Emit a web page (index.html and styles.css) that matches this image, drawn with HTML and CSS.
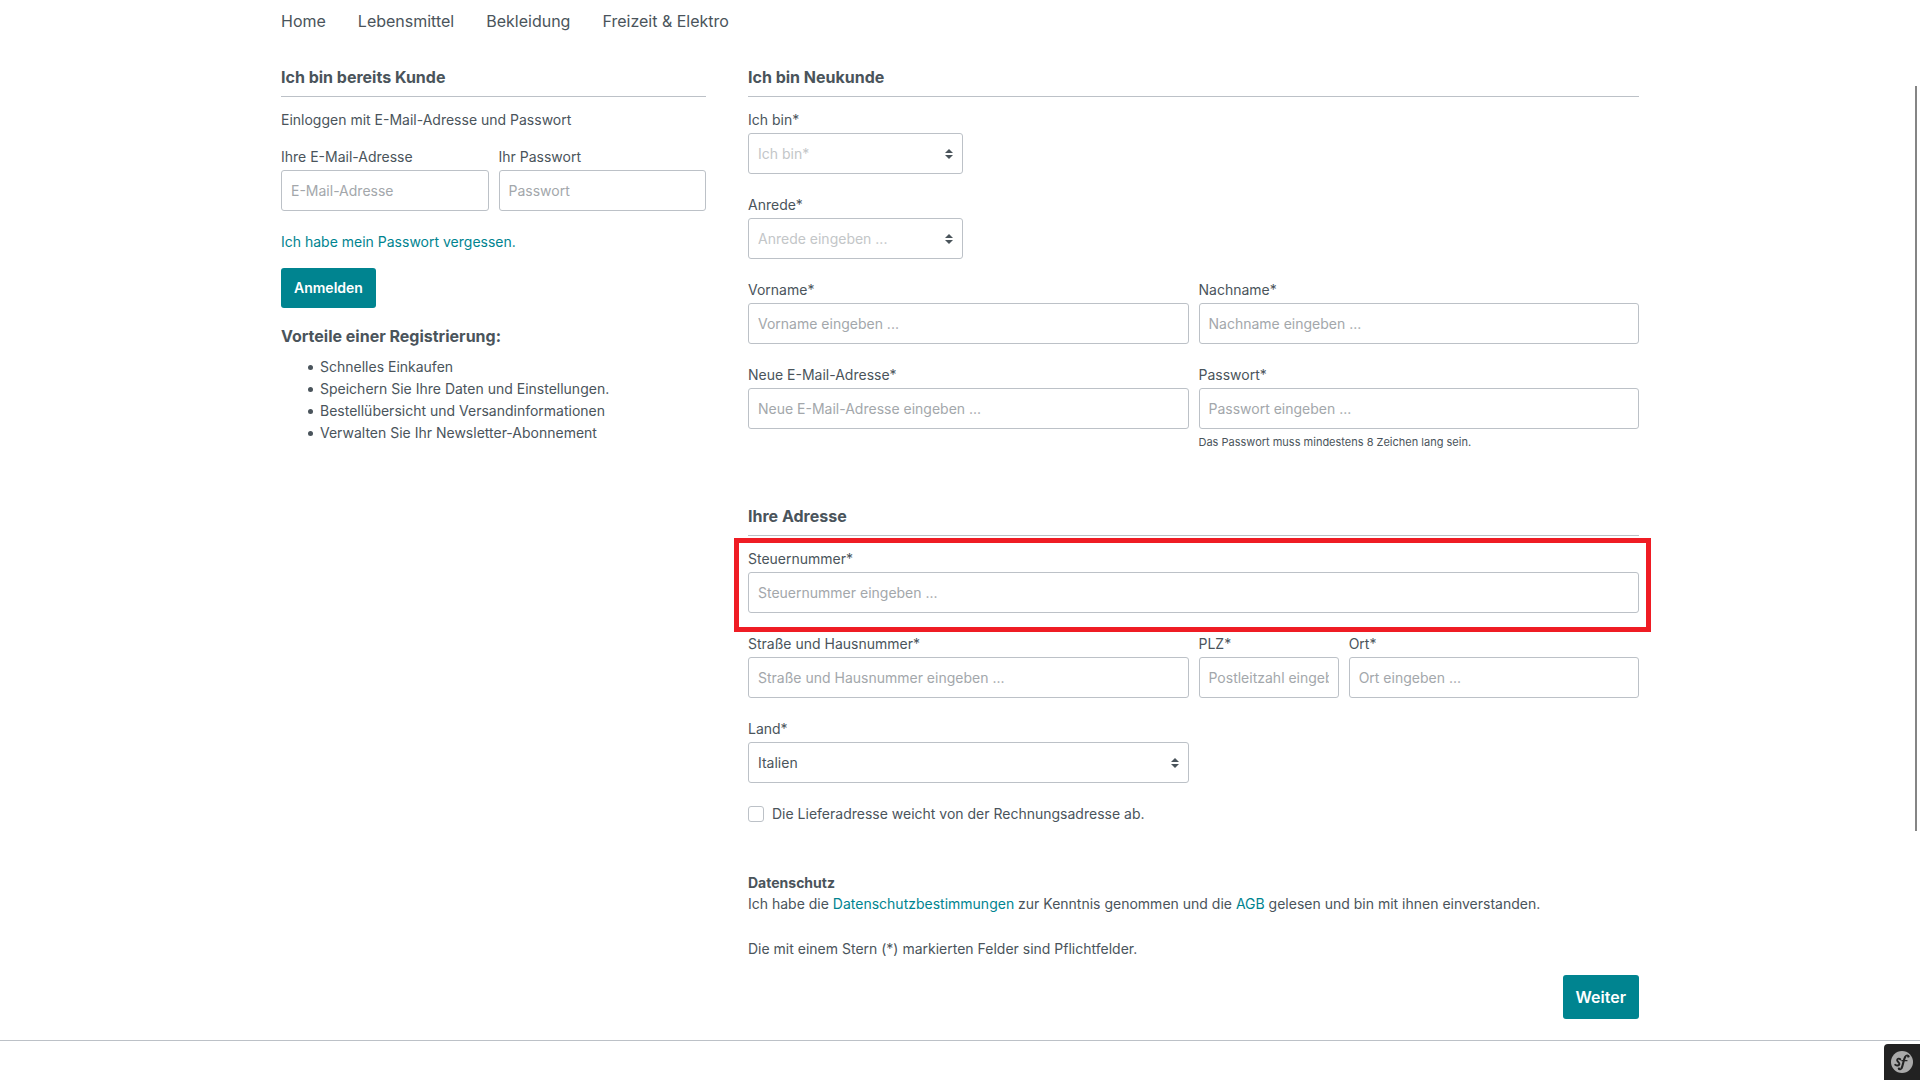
FILE: index.html
```html
<!DOCTYPE html>
<html lang="de">
<head>
<meta charset="utf-8">
<meta name="viewport" content="width=device-width, initial-scale=1">
<title>Registrierung</title>
<link rel="stylesheet" href="styles.css">
</head>
<body>
<nav class="main-nav container">
  <a href="#">Home</a>
  <a href="#">Lebensmittel</a>
  <a href="#">Bekleidung</a>
  <a href="#">Freizeit &amp; Elektro</a>
</nav>

<main class="container account">
  <section class="login">
    <form>
      <h2 class="card-title">Ich bin bereits Kunde</h2>
      <p class="login-intro">Einloggen mit E-Mail-Adresse und Passwort</p>
      <div class="login-fields">
        <div class="field">
          <label for="login-mail">Ihre E-Mail-Adresse</label>
          <input class="control" id="login-mail" type="email" placeholder="E-Mail-Adresse">
        </div>
        <div class="field">
          <label for="login-password">Ihr Passwort</label>
          <input class="control" id="login-password" type="password" placeholder="Passwort">
        </div>
      </div>
      <p class="recover"><a href="#">Ich habe mein Passwort vergessen.</a></p>
      <button class="btn" type="submit">Anmelden</button>
    </form>
    <h2 class="advantages-title">Vorteile einer Registrierung:</h2>
    <ul class="advantages">
      <li>Schnelles Einkaufen</li>
      <li>Speichern Sie Ihre Daten und Einstellungen.</li>
      <li>Bestellübersicht und Versandinformationen</li>
      <li>Verwalten Sie Ihr Newsletter-Abonnement</li>
    </ul>
  </section>

  <form class="register">
    <h2 class="card-title">Ich bin Neukunde</h2>
    <div class="form-grid">
      <div class="field quarter">
        <label for="account-type">Ich bin*</label>
        <div class="select">
          <select class="control is-empty" id="account-type"><option>Ich bin*</option></select>
          <svg class="caret" viewBox="0 0 8 10" aria-hidden="true"><path d="M4 0 8 4H0zM4 10 8 6H0z"/></svg>
        </div>
      </div>
      <div class="field quarter">
        <label for="salutation">Anrede*</label>
        <div class="select">
          <select class="control is-empty" id="salutation"><option>Anrede eingeben ...</option></select>
          <svg class="caret" viewBox="0 0 8 10" aria-hidden="true"><path d="M4 0 8 4H0zM4 10 8 6H0z"/></svg>
        </div>
      </div>
      <div class="field half new-row">
        <label for="first-name">Vorname*</label>
        <input class="control" id="first-name" type="text" placeholder="Vorname eingeben ...">
      </div>
      <div class="field half">
        <label for="last-name">Nachname*</label>
        <input class="control" id="last-name" type="text" placeholder="Nachname eingeben ...">
      </div>
      <div class="field half">
        <label for="mail">Neue E-Mail-Adresse*</label>
        <input class="control" id="mail" type="email" placeholder="Neue E-Mail-Adresse eingeben ...">
      </div>
      <div class="field half">
        <label for="password">Passwort*</label>
        <input class="control" id="password" type="password" placeholder="Passwort eingeben ...">
        <small class="hint">Das Passwort muss mindestens 8 Zeichen lang sein.</small>
      </div>
    </div>

    <h2 class="card-title address-title">Ihre Adresse</h2>
    <div class="form-grid">
      <div class="field full highlighted">
        <label for="tax">Steuernummer*</label>
        <input class="control" id="tax" type="text" placeholder="Steuernummer eingeben ...">
      </div>
      <div class="field half">
        <label for="street">Straße und Hausnummer*</label>
        <input class="control" id="street" type="text" placeholder="Straße und Hausnummer eingeben ...">
      </div>
      <div class="field sixth">
        <label for="zip">PLZ*</label>
        <input class="control" id="zip" type="text" placeholder="Postleitzahl eingeben ...">
      </div>
      <div class="field third">
        <label for="city">Ort*</label>
        <input class="control" id="city" type="text" placeholder="Ort eingeben ...">
      </div>
      <div class="field half">
        <label for="country">Land*</label>
        <div class="select">
          <select class="control" id="country"><option>Italien</option></select>
          <svg class="caret" viewBox="0 0 8 10" aria-hidden="true"><path d="M4 0 8 4H0zM4 10 8 6H0z"/></svg>
        </div>
      </div>
    </div>

    <div class="check">
      <input id="different-shipping" type="checkbox">
      <label for="different-shipping">Die Lieferadresse weicht von der Rechnungsadresse ab.</label>
    </div>

    <div class="privacy">
      <strong>Datenschutz</strong>
      <p>Ich habe die <a href="#">Datenschutzbestimmungen</a> zur Kenntnis genommen und die <a href="#">AGB</a> gelesen und bin mit ihnen einverstanden.</p>
    </div>
    <p class="required-note">Die mit einem Stern (*) markierten Felder sind Pflichtfelder.</p>
    <div class="submit">
      <button class="btn btn-large" type="submit">Weiter</button>
    </div>
  </form>
</main>

<footer class="footer"></footer>

<div class="scroll-thumb"></div>
<button class="debug-toggle" type="button" aria-label="Symfony">
  <svg viewBox="0 0 24 24" aria-hidden="true">
    <circle cx="12" cy="12" r="11" fill="#aaa"/>
    <g fill="none" stroke="#222" stroke-linecap="round" stroke-linejoin="round">
      <path stroke-width="1.9" d="M10.300 9.400C9.500 8.200 7.300 8.300 7.100 10c-.2 1.700 2.800 2.300 2.300 4.200-.3 1.300-2.300 1.900-4.200.6"/>
      <path stroke-width="2.100" d="M15.400 6.600c-1.700 2-2.300 8.600-3.800 11.500"/>
      <path stroke-width="1.400" d="M18.700 6.200c-.6-1.700-2.400-1.200-3.300.4M11.600 18.100c-.8 1.500-2.200 1.900-2.900.8"/>
      <path stroke-width="1.200" d="M11.800 10.700h5.200"/>
    </g>
    <circle cx="18.300" cy="6.400" r="1.200" fill="#222"/>
    <circle cx="9" cy="18.600" r="1.200" fill="#222"/>
  </svg>
</button>
</body>
</html>
```

FILE: styles.css
```css
* {
  box-sizing: border-box;
}

body {
  margin: 0;
  background: #fff;
  color: #4a545b;
  font: 14px/21px Inter, "Liberation Sans", sans-serif;
}

h2,
p,
ul {
  margin: 0;
}

a {
  color: #008490;
  text-decoration: none;
}

.container {
  max-width: 1398px;
  margin: 0 auto;
  padding: 0 20px;
}

.main-nav {
  display: flex;
  gap: 32px;
  padding-top: 9px;
  font-size: 16px;
  line-height: 24px;
}

.main-nav a {
  color: inherit;
}

.account {
  display: grid;
  grid-template-columns: 425fr 891fr;
  gap: 42px;
  align-items: start;
  padding-top: 32px;
}

.card-title {
  margin-bottom: 12px;
  padding-bottom: 7px;
  border-bottom: 1px solid #bcc1c7;
  font-size: 16px;
  line-height: 24px;
}

.login-intro {
  margin-bottom: 16px;
}

.login-fields {
  display: grid;
  grid-template-columns: 1fr 1fr;
  gap: 10px;
}

.form-grid {
  display: grid;
  grid-template-columns: repeat(12, minmax(0, 1fr));
  gap: 20px 10px;
}

.field {
  display: flex;
  flex-direction: column;
  gap: 3px;
  min-width: 0;
}

.full { grid-column: span 12; }
.half { grid-column: span 6; }
.third { grid-column: span 4; }
.quarter { grid-column: 1 / span 3; }
.sixth { grid-column: span 2; }
.new-row { grid-column: 1 / span 6; }

.control {
  display: block;
  width: 100%;
  height: 41px;
  padding: 0 9px;
  border: 1px solid #bcc1c7;
  border-radius: 3px;
  background: #fff;
  color: inherit;
  font: inherit;
  appearance: none;
}

.control::placeholder {
  color: #a3a7ab;
  opacity: 1;
}

.control.is-empty {
  color: #c3c6c8;
}

.select {
  position: relative;
}

.caret {
  position: absolute;
  top: 16px;
  right: 10px;
  width: 8px;
  height: 10px;
  fill: #4a545b;
  pointer-events: none;
}

.hint {
  margin-top: 2px;
  font-size: 11px;
  line-height: 17px;
}

.recover {
  margin: 20px 0 16px;
}

.btn {
  height: 40px;
  padding: 0 13px;
  border: 0;
  border-radius: 3px;
  background: #008490;
  color: #fff;
  font: 600 14px/40px Inter, "Liberation Sans", sans-serif;
}

.btn-large {
  height: 44px;
  font-size: 16px;
}

.advantages-title {
  margin: 16px 0 8px;
  font-size: 16px;
  line-height: 24px;
}

.advantages {
  padding-left: 27px;
  line-height: 22px;
  list-style: none;
}

.advantages li {
  display: flex;
  align-items: center;
  gap: 7px;
}

.advantages li::before {
  content: "";
  width: 5px;
  height: 5px;
  border-radius: 50%;
  background: #4a545b;
}

.address-title {
  margin-top: 53px;
}

.highlighted {
  position: relative;
}

.highlighted::after {
  content: "";
  position: absolute;
  inset: -10px -12px -19px -14px;
  border: 5px solid #ef1c24;
  pointer-events: none;
}

.check {
  display: flex;
  align-items: center;
  gap: 8px;
  margin-top: 20px;
}

.check input {
  width: 16px;
  height: 16px;
  margin: 0;
  border: 1px solid #bcc1c7;
  border-radius: 3px;
  background: #fff;
  appearance: none;
}

.privacy {
  margin-top: 48px;
}

.privacy strong {
  display: block;
}

.required-note {
  margin: 24px 0 16px;
}

.submit {
  display: flex;
  justify-content: flex-end;
}

.footer {
  margin-top: 21px;
  border-top: 1px solid #bcc1c7;
}

.scroll-thumb {
  position: fixed;
  top: 86px;
  right: 3px;
  width: 2px;
  height: 745px;
  background: #858585;
}

.debug-toggle {
  position: fixed;
  right: 0;
  bottom: 0;
  width: 36px;
  height: 36px;
  padding: 6px;
  border: 0;
  border-radius: 4px 0 0;
  background: #222;
}

.debug-toggle svg {
  display: block;
  width: 24px;
  height: 24px;
}
```
